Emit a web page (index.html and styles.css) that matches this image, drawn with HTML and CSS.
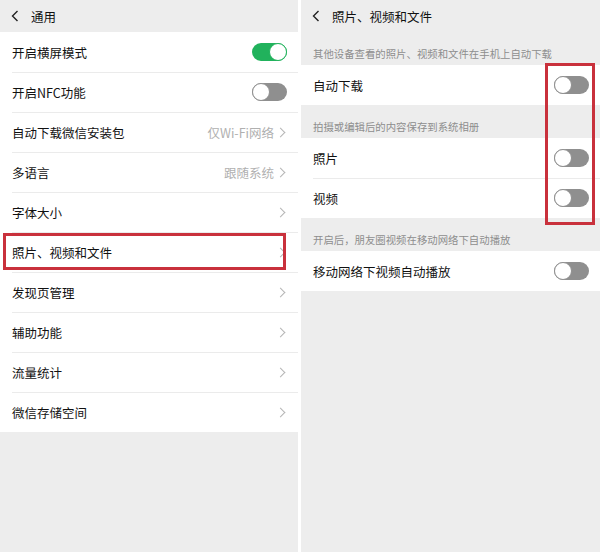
FILE: index.html
```html
<!DOCTYPE html>
<html lang="zh-CN">
<head>
    <meta charset="UTF-8">
    <meta name="viewport" content="width=device-width, initial-scale=1.0">
    <title>通用 / 照片、视频和文件</title>
    <link rel="stylesheet" href="styles.css">
</head>
<body>
    <div class="panel left">
        <div class="header">
            <svg class="back" width="8" height="12" viewBox="0 0 8 12"><path d="M6.5 1 L1.5 6 L6.5 11" fill="none" stroke="#222" stroke-width="1.4"/></svg>
            <span class="title">通用</span>
        </div>
        <div class="list">
            <div class="row">
                <span class="label">开启横屏模式</span>
                <span class="switch on"></span>
            </div>
            <div class="row">
                <span class="label">开启NFC功能</span>
                <span class="switch"></span>
            </div>
            <div class="row">
                <span class="label">自动下载微信安装包</span>
                <span class="value">仅Wi-Fi网络</span>
                <span class="arrow"></span>
            </div>
            <div class="row">
                <span class="label">多语言</span>
                <span class="value">跟随系统</span>
                <span class="arrow"></span>
            </div>
            <div class="row">
                <span class="label">字体大小</span>
                <span class="arrow"></span>
            </div>
            <div class="row marked">
                <span class="label">照片、视频和文件</span>
                <span class="arrow"></span>
                <span class="mark"></span>
            </div>
            <div class="row">
                <span class="label">发现页管理</span>
                <span class="arrow"></span>
            </div>
            <div class="row">
                <span class="label">辅助功能</span>
                <span class="arrow"></span>
            </div>
            <div class="row">
                <span class="label">流量统计</span>
                <span class="arrow"></span>
            </div>
            <div class="row">
                <span class="label">微信存储空间</span>
                <span class="arrow"></span>
            </div>
        </div>
    </div>

    <div class="panel right">
        <div class="header">
            <svg class="back" width="8" height="12" viewBox="0 0 8 12"><path d="M6.5 1 L1.5 6 L6.5 11" fill="none" stroke="#222" stroke-width="1.4"/></svg>
            <span class="title">照片、视频和文件</span>
        </div>
        <div class="caption">其他设备查看的照片、视频和文件在手机上自动下载</div>
        <div class="list">
            <div class="row">
                <span class="label">自动下载</span>
                <span class="switch"></span>
            </div>
        </div>
        <div class="caption">拍摄或编辑后的内容保存到系统相册</div>
        <div class="list">
            <div class="row">
                <span class="label">照片</span>
                <span class="switch"></span>
            </div>
            <div class="row">
                <span class="label">视频</span>
                <span class="switch"></span>
            </div>
        </div>
        <div class="caption">开启后，朋友圈视频在移动网络下自动播放</div>
        <div class="list">
            <div class="row">
                <span class="label">移动网络下视频自动播放</span>
                <span class="switch"></span>
            </div>
        </div>
        <span class="switch-mark"></span>
    </div>
</body>
</html>
```

FILE: styles.css
```css
body {
    margin: 0;
    width: 600px;
    height: 552px;
    display: flex;
    gap: 3px;
    background: #fff;
    font-family: "Noto Sans CJK SC", "Noto Sans", sans-serif;
    color: #111;
    overflow: hidden;
}
.panel {
    position: relative;
    background: #ededed;
    height: 552px;
}
.panel.left {
    width: 298px;
}
.panel.right {
    flex: 1;
}
.header {
    height: 32px;
    display: flex;
    align-items: center;
    padding-left: 11px;
}
.back {
    display: block;
}
.title {
    margin-left: 12px;
    font-size: 12.5px;
}
.list {
    background: #fff;
}
.row {
    position: relative;
    height: 40px;
    display: flex;
    align-items: center;
    padding: 0 11px 0 12px;
    font-size: 12.5px;
}
.row + .row::before {
    content: "";
    position: absolute;
    top: 0;
    left: 12px;
    right: 0;
    height: 1px;
    background: #ebebeb;
}
.label {
    flex: 1;
}
.value {
    color: #b0b0b0;
    margin-right: 3px;
}
.arrow {
    width: 6px;
    height: 6px;
    border-top: 1.2px solid #b5b5b5;
    border-right: 1.2px solid #b5b5b5;
    transform: rotate(45deg);
    margin-right: 3px;
}
.switch {
    position: relative;
    width: 35px;
    height: 18px;
    border-radius: 9px;
    background: #8f8f8f;
    box-sizing: border-box;
}
.switch::after {
    content: "";
    position: absolute;
    top: 0;
    left: 0;
    width: 18px;
    height: 18px;
    border-radius: 50%;
    background: #fff;
    border: 1.5px solid #8f8f8f;
    box-sizing: border-box;
}
.switch.on {
    background: #21b25c;
}
.switch.on::after {
    left: auto;
    right: 0;
    border-color: #21b25c;
}
.caption {
    height: 33px;
    display: flex;
    align-items: center;
    padding-left: 12px;
    padding-top: 10px;
    box-sizing: border-box;
    font-size: 10.4px;
    color: #8e8e8e;
}
.mark {
    position: absolute;
    top: 1px;
    left: 3px;
    width: 283px;
    height: 37px;
    border: 3px solid #c9313c;
    box-sizing: border-box;
}
.switch-mark {
    position: absolute;
    top: 63px;
    left: 244px;
    width: 50px;
    height: 162px;
    border: 3px solid #c9313c;
    box-sizing: border-box;
}
```
